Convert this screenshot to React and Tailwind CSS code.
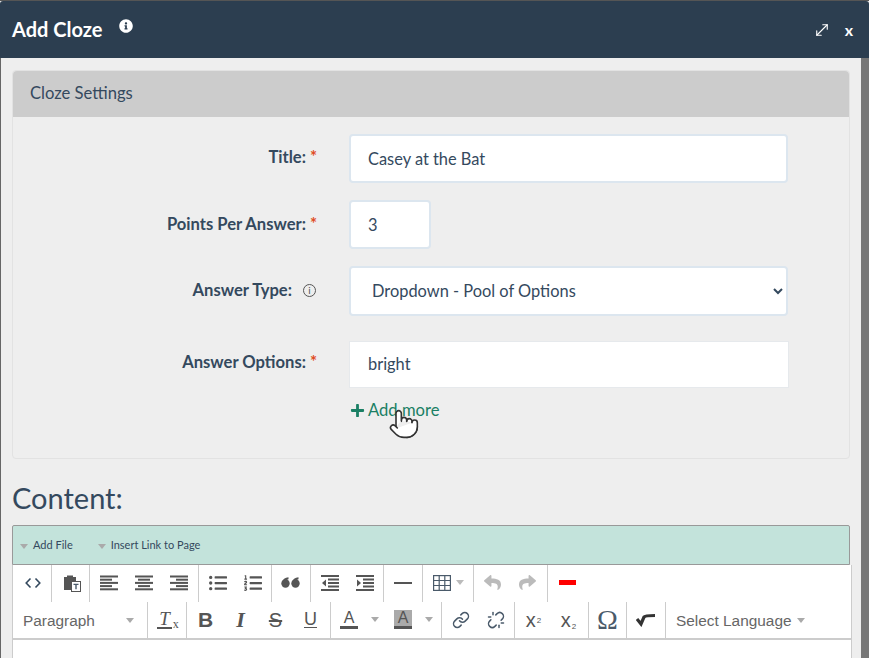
import { FaInfoCircle, FaPlus, FaListUl, FaListOl, FaReply, FaShare } from 'react-icons/fa'
import { Pointer, MoveDiagonal, Link, Unlink } from 'lucide-react'

function Lines({ rows }) {
  return (
    <svg width="18" height="16" viewBox="0 0 18 16" fill="#555">
      {rows.map((r, i) => (
        <rect key={i} x={r[0]} y={i * 3.2 + 0.5} width={r[1]} height="2" />
      ))}
    </svg>
  )
}

function Caret({ className = '' }) {
  return <span className={`inline-block w-0 h-0 border-x-[4px] border-x-transparent border-t-[5px] border-t-[#aaa] ${className}`} />
}

function Btn({ children, className = '' }) {
  return <div className={`w-[35px] h-full pb-[2px] flex items-center justify-center text-[#555] ${className}`}>{children}</div>
}

function Group({ children, className = '' }) {
  return <div className={`flex h-full pl-[1px] pr-[1px] border-r border-[#ccc] box-content items-center shrink-0 ${className}`}>{children}</div>
}

function Label({ text, required = true, info = false, shift = '-translate-y-[1px]' }) {
  return (
    <div className={`w-[336px] shrink-0 flex justify-end text-[16.6px] font-bold text-[#34495e] leading-5 ${info ? 'pr-[57px]' : 'pr-[43px]'} ${shift}`}>
      <span>{text}</span>
      {required && <span className="text-[#e04b24] ml-[4px] w-[6px] -mr-[10px]">*</span>}
      {info && (
        <span className="w-[13px] h-[13px] ml-[11px] -mr-[24px] mt-[4px] rounded-full border border-[#555] text-[10px] leading-[11px] text-center font-normal text-[#555]">i</span>
      )}
    </div>
  )
}

const inputClass = 'bg-white rounded border-2 border-[#dce6ef] text-[16.4px] text-[#34495e] pl-[17px] pr-[16px] pb-[1px] outline-none'

function Toolbar() {
  return (
    <div className="h-[75px] border-b-2 border-[#ccc] flex flex-col">
      <div className="flex h-[37px] shrink-0 ml-[1px]">
        <Group>
          <Btn>
            <svg width="16" height="12" viewBox="0 0 16 12" fill="none" stroke="#34495e" strokeWidth="1.6">
              <path d="M5.5 1.5L1.2 6l4.3 4.5M10.5 1.5L14.8 6l-4.3 4.5" />
            </svg>
          </Btn>
        </Group>
        <Group>
          <Btn className="pl-[2px]">
            <svg width="18" height="18" viewBox="0 0 18 18">
              <path d="M1 3h3V1.5h6V3h3v4H8v9H1z" fill="#555" />
              <rect x="8.5" y="7.5" width="9" height="10" fill="#fff" stroke="#555" />
              <path d="M10.5 9.8h5v1.3h-1.8v4.2h-1.4v-4.2h-1.8z" fill="#4a5a6a" />
            </svg>
          </Btn>
        </Group>
        <Group className="!pr-[2px]">
          <Btn><Lines rows={[[0, 18], [0, 12], [0, 18], [0, 12], [0, 18]]} /></Btn>
          <Btn><Lines rows={[[0, 18], [3, 12], [0, 18], [3, 12], [0, 18]]} /></Btn>
          <Btn><Lines rows={[[0, 18], [6, 12], [0, 18], [6, 12], [0, 18]]} /></Btn>
        </Group>
        <Group>
          <Btn><FaListUl size={18} /></Btn>
          <Btn><FaListOl size={18} /></Btn>
        </Group>
        <Group className="!pr-[2px]">
          <Btn>
            <svg width="19" height="11" viewBox="0 0 19 11" fill="#555">
              <circle cx="4.5" cy="6.5" r="4.2" />
              <path d="M1 5.5C1.5 2.5 4 .6 7.5.3v2C5.5 2.8 4.2 4 4 6z" />
              <circle cx="14.5" cy="6.5" r="4.2" />
              <path d="M11 5.5C11.5 2.5 14 .6 17.5.3v2c-2 .5-3.3 1.7-3.5 3.7z" />
            </svg>
          </Btn>
        </Group>
        <Group>
          <Btn>
            <svg width="18" height="16" viewBox="0 0 18 16" fill="#555">
              <rect x="0" y="0" width="18" height="2" />
              <rect x="7" y="3.5" width="11" height="2" />
              <rect x="7" y="7" width="11" height="2" />
              <rect x="7" y="10.5" width="11" height="2" />
              <rect x="0" y="14" width="18" height="2" />
              <path d="M5 4.5v7L1 8z" />
            </svg>
          </Btn>
          <Btn>
            <svg width="18" height="16" viewBox="0 0 18 16" fill="#555">
              <rect x="0" y="0" width="18" height="2" />
              <rect x="7" y="3.5" width="11" height="2" />
              <rect x="7" y="7" width="11" height="2" />
              <rect x="7" y="10.5" width="11" height="2" />
              <rect x="0" y="14" width="18" height="2" />
              <path d="M1 4.5v7L5 8z" />
            </svg>
          </Btn>
        </Group>
        <Group>
          <Btn className="w-[36px]"><div className="w-[18px] h-[2px] bg-[#555]" /></Btn>
        </Group>
        <Group className="w-[48px]">
          <div className="flex items-center pl-[9px] gap-[5px] pb-[2px]">
            <svg width="18" height="16" viewBox="0 0 18 16" fill="none" stroke="#4a5a6a" strokeWidth="1.2">
              <rect x="0.6" y="0.6" width="16.8" height="14.8" />
              <path d="M0.6 5.5h16.8M0.6 10.5h16.8M6.2 0.6v14.8M11.8 0.6v14.8" />
            </svg>
            <Caret className="border-t-[#bbb]" />
          </div>
        </Group>
        <Group className="!pr-[2px]">
          <Btn><FaReply size={17} className="text-[#bbb]" /></Btn>
          <Btn><FaShare size={17} className="text-[#bbb]" /></Btn>
        </Group>
        <div className="w-[38px] pb-[2px] flex items-center justify-center">
          <div className="w-[17px] h-[5px] bg-[#f00]" />
        </div>
      </div>
      <div className="flex h-[37px] shrink-0 ml-[1px]">
        <Group className="w-[133px] !px-0">
          <div className="w-full flex items-center justify-between pl-[9px] pr-[13px] text-[15.4px] text-[#666] font-['Liberation_Sans']">
            <span>Paragraph</span>
            <Caret />
          </div>
        </Group>
        <Group className="!pr-[2px]">
          <Btn>
            <span className="relative font-['Liberation_Serif'] italic text-[19px] text-[#555] border-b-2 border-[#555] leading-[17px] px-[2px] -ml-[4px]">
              T
              <span className="absolute -right-[7px] bottom-[-3px] not-italic text-[12px] leading-none">x</span>
            </span>
          </Btn>
        </Group>
        <Group className="!pr-[2px]">
          <Btn><span className="font-['Liberation_Sans'] font-bold text-[21px]">B</span></Btn>
          <Btn><span className="font-['Liberation_Serif'] italic font-bold text-[22px]">I</span></Btn>
          <Btn><span className="font-['Liberation_Sans'] line-through text-[20px]">S</span></Btn>
          <Btn><span className="font-['Liberation_Sans'] underline underline-offset-2 text-[18px]">U</span></Btn>
        </Group>
        <Group className="w-[110px] !px-0">
          <div className="flex items-center pl-[9px] pb-[2px]">
            <span className="w-[18px] h-[19px] border-b-[3px] border-[#555] text-center font-['Liberation_Sans'] text-[16px] leading-[16px] text-[#555]">A</span>
            <Caret className="ml-[13px]" />
            <span className="ml-[15px] w-[18px] h-[19px] bg-[#aaa] border-b-[3px] border-[#555] text-center font-['Liberation_Sans'] text-[16px] leading-[16px] text-[#555]">A</span>
            <Caret className="ml-[13px]" />
          </div>
        </Group>
        <Group>
          <Btn><Link size={18} strokeWidth={2} className="text-[#4a5a6a]" /></Btn>
          <Btn><Unlink size={18} strokeWidth={2} className="text-[#4a5a6a]" /></Btn>
        </Group>
        <Group className="!pr-[2px]">
          <Btn><span className="font-['Liberation_Sans'] text-[20px] leading-none">x<sup className="text-[8px] ml-[1px]">2</sup></span></Btn>
          <Btn><span className="font-['Liberation_Sans'] text-[20px] leading-none">x<sub className="text-[8px] ml-[1px]">2</sub></span></Btn>
        </Group>
        <Group>
          <Btn><span className="font-['Liberation_Serif'] text-[28px] leading-none text-[#4a5a6a]">Ω</span></Btn>
        </Group>
        <Group className="!pr-[2px]">
          <Btn>
            <svg width="20" height="14" viewBox="0 0 20 14" fill="none" stroke="#333" strokeWidth="3.2">
              <path d="M1 6l4 5 3-7c1-1.5 6-1.5 11-1.5" />
            </svg>
          </Btn>
        </Group>
        <div className="flex items-center pl-[10px] gap-[5px] text-[15.4px] text-[#666] font-['Liberation_Sans']">
          <span>Select Language</span>
          <Caret />
        </div>
      </div>
    </div>
  )
}

export default function App() {
  return (
    <div className="w-[869px] h-[658px] overflow-hidden flex flex-col bg-[#eee] font-['Lato',sans-serif] border-t border-[#555] relative">
      <div className="h-[57px] shrink-0 bg-[#2c3e50] flex items-start text-white pl-[12px] pr-[16px] rounded-t-[3px]">
        <h1 className="text-[20px] font-bold mt-[14px] leading-7">Add Cloze</h1>
        <FaInfoCircle size={14} className="ml-[17px] mt-[18px]" />
        <div className="ml-auto flex items-center gap-[14px] mt-[20px]">
          <MoveDiagonal size={18} strokeWidth={1.5} />
          <span className="text-[16px] font-bold leading-4">x</span>
        </div>
      </div>

      <div className="flex-1 flex min-h-0">
        <div className="flex-1 min-w-0 pl-[12px] pr-[11px] pt-[12px] border-l border-[#666]">
          <section className="w-[838px] -ml-[1px] h-[389px] rounded border border-[#e2e2e2]">
            <div className="h-[46px] bg-[#ccc] rounded-t flex items-center pl-[17px] pb-[2px] text-[16.6px] text-[#34495e]">Cloze Settings</div>
            <div className="flex flex-col pt-[17px]">
              <div className="flex items-center h-[49px]">
                <Label text="Title:" shift="-translate-y-[2px]" />
                <input readOnly value="Casey at the Bat" className={`${inputClass} w-[439px] h-[49px]`} />
              </div>
              <div className="flex items-center h-[49px] mt-[17px]">
                <Label text="Points Per Answer:" />
                <input readOnly value="3" className={`${inputClass} w-[82px] h-[49px]`} />
              </div>
              <div className="flex items-center h-[50px] mt-[17px]">
                <Label text="Answer Type:" required={false} info />
                <select className={`${inputClass} w-[439px] h-[50px] !px-[17px]`} defaultValue="pool">
                  <option value="pool">Dropdown - Pool of Options</option>
                </select>
              </div>
              <div className="flex items-center h-[47px] mt-[25px]">
                <Label text="Answer Options:" shift="-translate-y-[3px]" />
                <input readOnly value="bright" className="bg-white border border-[#e6e9ec] text-[16.4px] text-[#34495e] pl-[18px] pr-[17px] pb-[2px] outline-none w-[440px] h-[47px]" />
              </div>
              <div className="flex items-center pl-[337px] mt-[12px] text-[16.6px] text-[#1a7f64] leading-5 gap-[3px] relative">
                <FaPlus size={15} />
                <span>Add more</span>
                <Pointer size={32} strokeWidth={1.2} fill="#fff" className="absolute left-[375px] top-[8px] text-[#333]" />
              </div>
            </div>
          </section>

          <h2 className="-ml-[1px] text-[29px] text-[#34495e] leading-8 mt-[23px]">Content:</h2>

          <div className="w-[838px] -ml-[1px] h-[40px] mt-[11px] bg-[#c3e3db] border border-[#999] rounded-t-[2px] flex items-center text-[11px] text-[#34495e]">
            <Caret className="ml-[7px] mt-[3px] border-t-[#778]" />
            <span className="ml-[5px]">Add File</span>
            <Caret className="ml-[25px] mt-[3px] border-t-[#778]" />
            <span className="ml-[5px]">Insert Link to Page</span>
          </div>

          <div className="w-[840px] -ml-[1px] h-[200px] bg-white border border-[#ccc] border-t-0">
            <Toolbar />
          </div>
        </div>
        <div className="w-[8px] shrink-0 bg-[#777]" />
      </div>
    </div>
  )
}
